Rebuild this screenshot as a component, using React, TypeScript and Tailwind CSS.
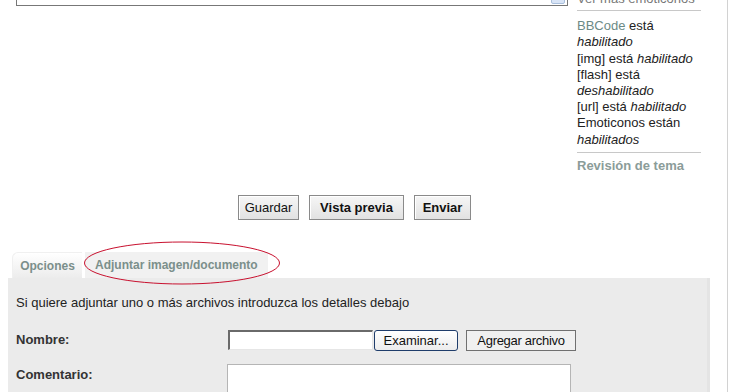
import React from "react";

const Btn = ({ children, bold, w }: { children: React.ReactNode; bold?: boolean; w: string }) => (
  <button
    className={`${w} h-[25px] border border-[#8a8a8a] bg-gradient-to-b from-[#f6f6f6] to-[#e2e2e2] text-[13px] text-[#111] ${bold ? "font-bold" : ""} shadow-[inset_1px_1px_0_#fff]`}
  >
    {children}
  </button>
);

export default function App() {
  return (
    <div className="w-[731px] h-[392px] overflow-hidden bg-white font-['Liberation_Sans',Arial,sans-serif] text-[#222]">
      <div className="relative w-[728px] h-[420px] border-r border-[#d2d2d2]">
        {/* editor + sidebar */}
        <div className="flex gap-[9px] pl-[16px]">
          <div className="relative w-[552px] h-[40px] -mt-[34px] border border-[#777] border-t-0">
            <div className="absolute right-[2px] bottom-[1px] w-[14px] h-[14px] rounded-[2px] border border-[#a9bfdc] bg-[#d8e4f6]" />
          </div>
          <div className="w-[124px] text-[13px] leading-[16.2px]">
            <div className="-mt-[9px] pb-[3px] border-b border-[#c8c8c8] text-[#777] whitespace-nowrap">Ver más emoticonos</div>
            <div className="pt-[7px] pb-[4px] border-b border-[#c8c8c8]">
              <div>
                <span className="text-[#6c8a86]">BBCode</span> está
              </div>
              <div className="italic">habilitado</div>
              <div>
                [img] está <span className="italic">habilitado</span>
              </div>
              <div>[flash] está</div>
              <div className="italic">deshabilitado</div>
              <div>
                [url] está <span className="italic">habilitado</span>
              </div>
              <div>Emoticonos están</div>
              <div className="italic">habilitados</div>
            </div>
            <div className="pt-[5px] font-bold text-[#8b9c99] text-[13px]">Revisión de tema</div>
          </div>
        </div>

        {/* buttons */}
        <div className="flex justify-center gap-[10px] mt-[21px] pr-[18px]">
          <Btn w="w-[61px]">Guardar</Btn>
          <Btn w="w-[95px]" bold>
            Vista previa
          </Btn>
          <Btn w="w-[57px]" bold>
            Enviar
          </Btn>
        </div>

        {/* tabs */}
        <div className="relative mt-[32px] ml-[8px] w-[702px]">
          <div className="flex gap-[3px] pl-[4px] h-[26px] items-stretch">
            <div className="w-[70px] rounded-tl-[6px] border-t border-l border-[#f0f0f0] bg-gradient-to-b from-white to-[#ececec] flex items-center justify-center text-[12px] font-bold text-[#7b8f8b]">
              Opciones
            </div>
            <div className="w-[183px] bg-[#f1f1f1] flex items-center pl-[10px] text-[12px] font-bold text-[#7b8f8b] whitespace-nowrap">
              Adjuntar imagen/documento
            </div>
          </div>
          <svg className="absolute left-[75px] top-[-11px]" width="198" height="44" viewBox="0 0 198 44">
            <ellipse cx="99" cy="22" rx="97.5" ry="21" fill="none" stroke="#c8102e" strokeWidth="1" />
          </svg>

          {/* panel */}
          <div className="bg-[#ebebeb] border-r-[3px] border-[#e4e4e4] px-[8px] pt-[15px] h-[140px] text-[13px]">
            <div className="text-[#222]">Si quiere adjuntar uno o más archivos introduzca los detalles debajo</div>
            <div className="flex items-center mt-[17px]">
              <div className="w-[212px] font-bold text-[13px] text-[#333]">Nombre:</div>
              <div className="w-[145px] h-[20px] bg-white border-t-2 border-l-2 border-[#6a6a6a] border-b border-r border-b-[#e6e6e6] border-r-[#e6e6e6]" />
              <button className="w-[84px] h-[21px] ml-[1px] rounded-[3px] border border-[#1f3d6b] bg-gradient-to-b from-white to-[#ececec] text-[13px] text-[#111]">
                Examinar...
              </button>
              <button className="w-[110px] h-[21px] ml-[8px] border border-[#707070] bg-[#f0f0f0] text-[13px] text-[#111] tracking-[-0.3px]">
                Agregar archivo
              </button>
            </div>
            <div className="flex items-start mt-[13px]">
              <div className="w-[211px] pt-[1px] font-bold text-[13px] text-[#333]">Comentario:</div>
              <div className="w-[344px] h-[60px] bg-white border border-[#b5b5b5]" />
            </div>
          </div>
        </div>
      </div>
    </div>
  );
}
